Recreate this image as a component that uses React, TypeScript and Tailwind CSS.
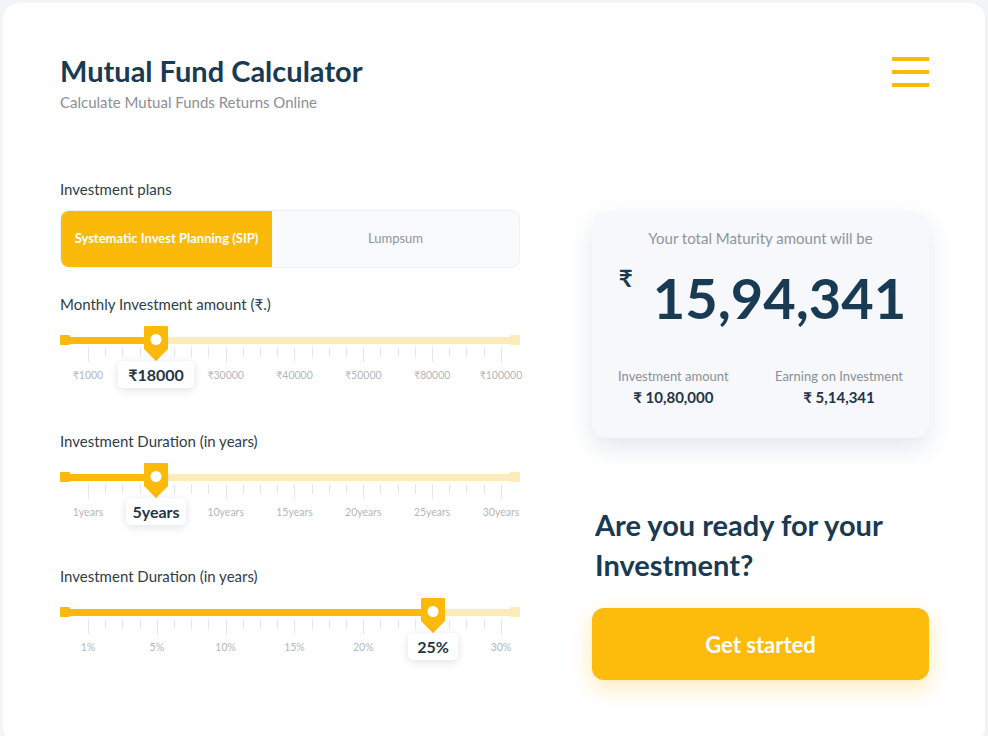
import React from "react";

const font = { fontFamily: "Lato, 'Noto Sans', 'DejaVu Sans', sans-serif" };

type SliderProps = {
  label: string;
  marks: string[];
  active: number;
  value: string;
  pos: number; // thumb x within 460px track
  boxW: number;
  gap?: string;
};

function Slider({ label, marks, active, value, pos, boxW, gap = "mb-[42px]" }: SliderProps) {
  const ticks = Array.from({ length: 25 }, (_, i) => i);
  return (
    <div className={gap}>
      <div className="h-5 text-[15px] leading-5 text-[#2c3e4c]">{label}</div>
      <div className="relative h-[75px] w-[460px]">
        {/* track */}
        <div className="absolute left-0 right-0 top-[21px] flex items-center">
          <div className="h-[10px] w-[10px] rounded-[1px] bg-[#fbb90a]" />
          <div className="h-[7px] bg-[#fbb90a]" style={{ width: pos - 10 }} />
          <div className="h-[7px] flex-1 bg-[#fdebb9]" />
          <div className="h-[10px] w-[10px] rounded-[1px] bg-[#fdebb9]" />
        </div>
        {/* ticks */}
        <div className="absolute left-[28px] right-[18px] top-[33px] flex justify-between">
          {ticks.map((t) => (
            <div
              key={t}
              className={`w-px bg-[#e4e6ea] ${t % 4 === 0 ? "h-[15px]" : "h-[10px]"}`}
            />
          ))}
        </div>
        {/* mark labels */}
        <div className="absolute left-[28px] right-[19px] top-[53px] flex justify-between">
          {marks.map((m, i) => (
            <div key={m} className="flex w-0 justify-center">
              <span
                className={`whitespace-nowrap text-[10.5px] leading-4 text-[#b3b7bc] ${i === active ? "invisible" : ""}`}
              >
                {m}
              </span>
            </div>
          ))}
        </div>
        {/* thumb */}
        <svg
          className="absolute top-[12px]"
          style={{ left: pos - 12 }}
          width="24"
          height="35"
          viewBox="0 0 24 35"
        >
          <path d="M0 1 Q0 0 1 0 H23 Q24 0 24 1 V23 L12 35 L0 23 Z" fill="#fbb90a" />
          <circle cx="12" cy="13.5" r="5.5" fill="#ffffff" />
        </svg>
        {/* value box */}
        <div
          className="absolute top-[47px] flex h-[27px] items-center justify-center rounded-[5px] bg-white text-[16px] font-bold text-[#1f3547] shadow-[0_2px_8px_rgba(30,50,80,0.14)]"
          style={{ left: pos - boxW / 2, width: boxW }}
        >
          {value}
        </div>
      </div>
    </div>
  );
}

export default function App() {
  return (
    <div className="min-h-screen bg-[#f3f4f8] p-[3px]" style={font}>
      <div className="h-[740px] rounded-[16px] bg-white pl-[57px] pr-[56px] pt-[51px]">
        {/* header */}
        <div className="flex items-start justify-between">
          <div>
            <h1 className="text-[29px] font-bold leading-[34px] text-[#183a52]">
              Mutual Fund Calculator
            </h1>
            <p className="mt-[4px] text-[15px] leading-5 text-[#8b9096]">
              Calculate Mutual Funds Returns Online
            </p>
          </div>
          <div className="mt-[3px] flex w-[37px] flex-col gap-[9px]">
            <span className="h-[4px] bg-[#fbb90a]" />
            <span className="h-[4px] bg-[#fbb90a]" />
            <span className="h-[4px] bg-[#fbb90a]" />
          </div>
        </div>

        <div className="mt-[67px] flex justify-between">
          {/* left column */}
          <div className="w-[460px]">
            <div className="text-[15px] leading-5 text-[#2c3e4c]">Investment plans</div>
            <div className="mb-[26px] mt-[11px] flex h-[58px] overflow-hidden rounded-[9px] border border-[#eef1f5] bg-[#f8fafc]">
              <div className="flex w-[211px] items-center justify-center bg-[#fbb90a] text-[13px] font-bold text-white">
                Systematic Invest Planning (SIP)
              </div>
              <div className="flex flex-1 items-center justify-center text-[13px] text-[#8f959b]">
                Lumpsum
              </div>
            </div>

            <Slider
              label="Monthly Investment amount (₹.)"
              marks={["₹1000", "₹18000", "₹30000", "₹40000", "₹50000", "₹80000", "₹100000"]}
              active={1}
              value="₹18000"
              pos={96}
              boxW={76}
            />
            <Slider
              label="Investment Duration (in years)"
              marks={["1years", "5years", "10years", "15years", "20years", "25years", "30years"]}
              active={1}
              value="5years"
              pos={96}
              boxW={60}
              gap="mb-[40px]"
            />
            <Slider
              label="Investment Duration (in years)"
              marks={["1%", "5%", "10%", "15%", "20%", "25%", "30%"]}
              active={5}
              value="25%"
              pos={373}
              boxW={50}
            />
          </div>

          {/* right column */}
          <div className="w-[337px] pt-[33px]">
            <div className="h-[226px] rounded-[14px] bg-[#f6f8fb] px-6 pt-[16px] shadow-[0_10px_24px_rgba(40,70,120,0.13)]">
              <p className="text-center text-[15px] leading-5 text-[#90959b]">
                Your total Maturity amount will be
              </p>
              <div className="ml-[4px] mt-[20px] flex items-start justify-center">
                <span className="mr-[20px] mt-[-2px] text-[24px] font-bold leading-6 text-[#183a52]">₹</span>
                <span className="text-[56px] font-bold leading-[60px] text-[#183a52]">15,94,341</span>
              </div>
              <div className="mt-[38px] flex justify-between px-[2px]">
                <div className="text-center">
                  <p className="text-[13px] leading-5 text-[#8b9096]">Investment amount</p>
                  <p className="mt-[1px] text-[15px] font-bold leading-5 text-[#1f3547]">₹ 10,80,000</p>
                </div>
                <div className="text-center">
                  <p className="text-[13px] leading-5 text-[#8b9096]">Earning on Investment</p>
                  <p className="mt-[1px] text-[15px] font-bold leading-5 text-[#1f3547]">₹ 5,14,341</p>
                </div>
              </div>
            </div>

            <h2 className="ml-[3px] mt-[67px] text-[29px] font-bold leading-[40px] text-[#183a52]">
              Are you ready for your Investment?
            </h2>
            <button className="mt-[23px] flex h-[72px] w-full items-center justify-center rounded-[12px] bg-[#fdbb0c] text-[22px] font-bold text-white shadow-[0_8px_22px_rgba(253,187,12,0.3)]">
              Get started
            </button>
          </div>
        </div>
      </div>
    </div>
  );
}
